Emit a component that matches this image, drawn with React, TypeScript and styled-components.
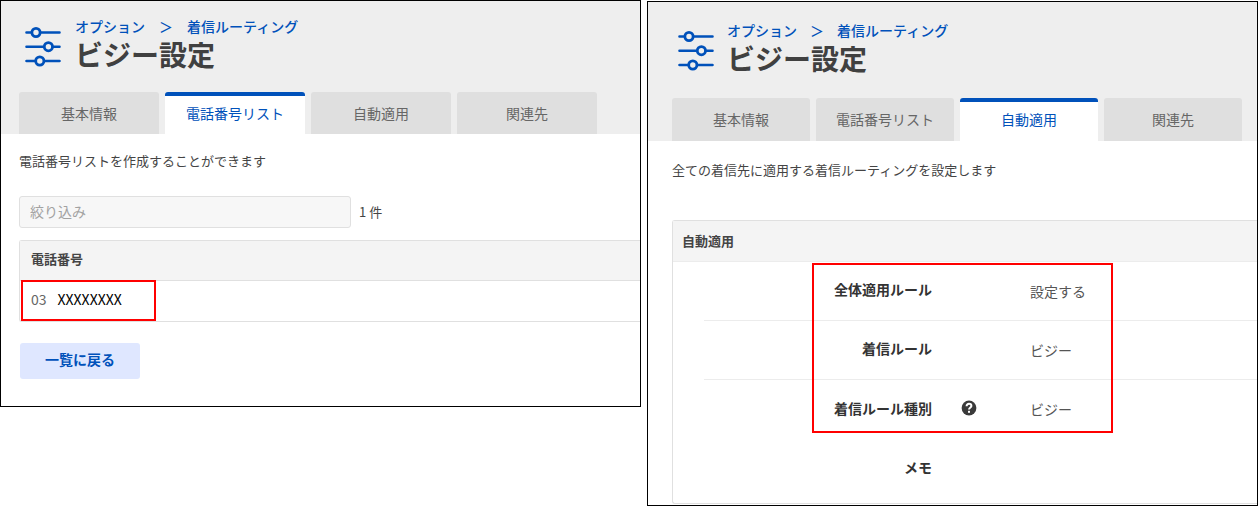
import React from "react";
import styled, { createGlobalStyle } from "styled-components";

const GlobalStyle = createGlobalStyle`
  *, *::before, *::after { box-sizing: border-box; }
  body {
    margin: 0;
    background: #fff;
    color: #444;
    font-family: "Noto Sans CJK JP", "Noto Sans", sans-serif;
    font-size: 14px;
    line-height: 20px;
  }
  button, input { font: inherit; }
`;

const Page = styled.main`
  display: grid;
  grid-template-columns: minmax(0, 641fr) minmax(0, 611fr);
  align-items: start;
  gap: 6px;
`;

const Panel = styled.section<{ $roomy?: boolean }>`
  --gutter: ${(p) => (p.$roomy ? 24 : 18)}px;
  margin-top: ${(p) => (p.$roomy ? 1 : 0)}px;
  border: 1px solid #000;
  overflow: hidden;
  background: #fff;
`;

const Header = styled.header<{ $roomy?: boolean }>`
  display: flex;
  flex-direction: column;
  gap: ${(p) => (p.$roomy ? 22 : 20)}px;
  padding: ${(p) => (p.$roomy ? 18 : 15)}px 0 0 var(--gutter);
  background: #eee;
`;

const Heading = styled.div<{ $roomy?: boolean }>`
  display: flex;
  align-items: flex-end;
  gap: ${(p) => (p.$roomy ? 13 : 14)}px;
  padding-left: 6px;
`;

const Crumbs = styled.nav`
  display: flex;
  color: #0051ba;
  font-weight: 500;
  white-space: nowrap;
`;

const CrumbLink = styled.a`
  color: inherit;
  text-decoration: none;
`;

const CrumbMark = styled.span<{ $roomy?: boolean }>`
  padding: 0 ${(p) => (p.$roomy ? 13 : 14)}px;
`;

const Title = styled.h1`
  margin: 0;
  color: #404040;
  font-size: 28px;
  font-weight: 700;
  line-height: 36px;
`;

const Tabs = styled.div`
  display: flex;
  gap: 6px;
`;

const Tab = styled.button<{ $active: boolean; $roomy?: boolean }>`
  flex: 0 1 ${(p) => (p.$roomy ? 138 : 140)}px;
  min-width: 0;
  height: ${(p) => (p.$roomy ? 43 : 42)}px;
  padding: 0 0 5px;
  border: 0;
  border-top: 4px solid ${(p) => (p.$active ? "#0051ba" : "#dfdfdf")};
  border-radius: 3px 3px 0 0;
  background: ${(p) => (p.$active ? "#fff" : "#dfdfdf")};
  color: ${(p) => (p.$active ? "#0051ba" : "#666")};
  white-space: nowrap;
`;

const Body = styled.div<{ $roomy?: boolean }>`
  padding-top: ${(p) => (p.$roomy ? 19 : 17)}px;
  padding-bottom: ${(p) => (p.$roomy ? 1 : 27)}px;
  padding-left: var(--gutter);
`;

const Lead = styled.p<{ $gap: number }>`
  margin: 0 0 ${(p) => p.$gap}px;
  font-size: 13px;
`;

const FilterRow = styled.div`
  display: flex;
  align-items: center;
  gap: 8px;
  margin-bottom: 12px;
  font-size: 13px;
`;

const FilterInput = styled.input`
  width: 332px;
  min-width: 0;
  height: 32px;
  padding: 0 10px 2px;
  border: 1px solid #e0e0e0;
  border-radius: 3px;
  background: #f7f7f7;
  font-size: 14px;
  &::placeholder { color: #a2a2a2; opacity: 1; }
`;

const TableFrame = styled.div`
  position: relative;
  margin-bottom: 21px;
  border: 1px solid #e0e0e0;
  border-right: 0;
  border-radius: 3px 0 0 3px;
`;

const NumberTable = styled.table`
  width: 100%;
  border-spacing: 0;
  text-align: left;
  th, td {
    height: 40px;
    padding: 0 11px 4px;
  }
  th {
    padding-bottom: 3px;
    border-bottom: 1px solid #e0e0e0;
    background: #f4f4f4;
    font-size: 13px;
    font-weight: 700;
  }
  td { color: #666; }
`;

const Masked = styled.span`
  margin-left: 11px;
  color: #000;
`;

const Mark = styled.div<{ $top: number; $left: number; $width: number; $height: number }>`
  position: absolute;
  top: ${(p) => p.$top}px;
  left: ${(p) => p.$left}px;
  width: ${(p) => p.$width}px;
  height: ${(p) => p.$height}px;
  border: 2px solid #f00;
  pointer-events: none;
`;

const BackButton = styled.button`
  display: block;
  width: 120px;
  height: 36px;
  margin-left: 1px;
  padding: 0 0 4px;
  border: 0;
  border-radius: 3px;
  background: #dfe7ff;
  color: #0051ba;
  font-weight: 700;
`;

const Card = styled.section`
  position: relative;
  padding-bottom: 5px;
  border: 1px solid #e0e0e0;
  border-right: 0;
  border-radius: 3px 0 0 3px;
`;

const CardTitle = styled.h2`
  margin: 0;
  padding: 10px 9px;
  border-bottom: 1px solid #ececec;
  background: #f4f4f4;
  font-size: 13px;
  font-weight: 700;
`;

const Fields = styled.dl`
  margin: 0;
  padding-left: 31px;
`;

const Field = styled.div<{ $ruled?: boolean }>`
  display: grid;
  grid-template-columns: 228px 70px 1fr;
  align-items: center;
  height: 59px;
  padding-bottom: 3px;
  border-bottom: ${(p) => (p.$ruled ? "1px solid #ececec" : "0")};
`;

const FieldName = styled.dt`
  padding-bottom: 1px;
  color: #333;
  font-weight: 700;
  text-align: right;
`;

const FieldHelp = styled.dd`
  display: flex;
  margin: 0;
  padding-left: 29px;
`;

const FieldValue = styled.dd`
  margin: 0;
  padding: 2px 0 0 28px;
  color: #555;
`;

const HelpButton = styled.button`
  display: flex;
  padding: 0;
  border: 0;
  background: none;
`;

const SlidersIcon = () => (
  <svg width="36" height="46" viewBox="0 0 36 46" fill="#eee" stroke="#0051ba" strokeLinecap="round" aria-hidden="true">
    <path d="M1.5 6.5H34.5M1.5 20.7H34.5M1.5 35H34.5" strokeWidth="2.6" />
    <g strokeWidth="2.8">
      <circle cx="11" cy="6.5" r="4.1" />
      <circle cx="23.4" cy="20.7" r="4.1" />
      <circle cx="14.8" cy="35" r="4.1" />
    </g>
  </svg>
);

const HelpIcon = () => (
  <svg width="16" height="16" viewBox="0 0 16 16" aria-hidden="true">
    <circle cx="8" cy="8" r="7.4" fill="#3a3a3a" />
    <path d="M5.6 6.2C5.6 4.6 6.6 3.8 8 3.8S10.4 4.7 10.4 6C10.4 7.5 8 7.6 8 9.6" fill="none" stroke="#fff" strokeWidth="2" />
    <rect x="7" y="10.8" width="2" height="2" fill="#fff" />
  </svg>
);

const TABS = ["基本情報", "電話番号リスト", "自動適用", "関連先"];

const FIELDS = [
  { name: "全体適用ルール", value: "設定する", ruled: true },
  { name: "着信ルール", value: "ビジー", ruled: true },
  { name: "着信ルール種別", value: "ビジー", help: true },
  { name: "メモ", value: "" },
];

const ScreenHeader = ({ active, roomy }: { active: string; roomy?: boolean }) => (
  <Header $roomy={roomy}>
    <Heading $roomy={roomy}>
      <SlidersIcon />
      <div>
        <Crumbs aria-label="パンくず">
          <CrumbLink href="#option">オプション</CrumbLink>
          <CrumbMark $roomy={roomy}>＞</CrumbMark>
          <CrumbLink href="#routing">着信ルーティング</CrumbLink>
        </Crumbs>
        <Title>ビジー設定</Title>
      </div>
    </Heading>
    <Tabs role="tablist">
      {TABS.map((label) => (
        <Tab key={label} type="button" role="tab" aria-selected={label === active} $active={label === active} $roomy={roomy}>
          {label}
        </Tab>
      ))}
    </Tabs>
  </Header>
);

export default function App() {
  return (
    <>
      <GlobalStyle />
      <Page>
        <Panel>
          <ScreenHeader active="電話番号リスト" />
          <Body>
            <Lead $gap={25}>電話番号リストを作成することができます</Lead>
            <FilterRow>
              <FilterInput type="text" placeholder="絞り込み" aria-label="絞り込み" />
              <span>1 件</span>
            </FilterRow>
            <TableFrame>
              <NumberTable>
                <thead>
                  <tr>
                    <th scope="col">電話番号</th>
                  </tr>
                </thead>
                <tbody>
                  <tr>
                    <td>
                      03<Masked>XXXXXXXX</Masked>
                    </td>
                  </tr>
                </tbody>
              </NumberTable>
              <Mark $top={39} $left={1} $width={135} $height={41} />
            </TableFrame>
            <BackButton type="button">一覧に戻る</BackButton>
          </Body>
        </Panel>

        <Panel $roomy>
          <ScreenHeader active="自動適用" roomy />
          <Body $roomy>
            <Lead $gap={40}>全ての着信先に適用する着信ルーティングを設定します</Lead>
            <Card>
              <CardTitle>自動適用</CardTitle>
              <Fields>
                {FIELDS.map((field) => (
                  <Field key={field.name} $ruled={field.ruled}>
                    <FieldName>{field.name}</FieldName>
                    <FieldHelp>
                      {field.help && (
                        <HelpButton type="button" aria-label="ヘルプ">
                          <HelpIcon />
                        </HelpButton>
                      )}
                    </FieldHelp>
                    <FieldValue>{field.value}</FieldValue>
                  </Field>
                ))}
              </Fields>
              <Mark $top={42} $left={139} $width={301} $height={170} />
            </Card>
          </Body>
        </Panel>
      </Page>
    </>
  );
}
